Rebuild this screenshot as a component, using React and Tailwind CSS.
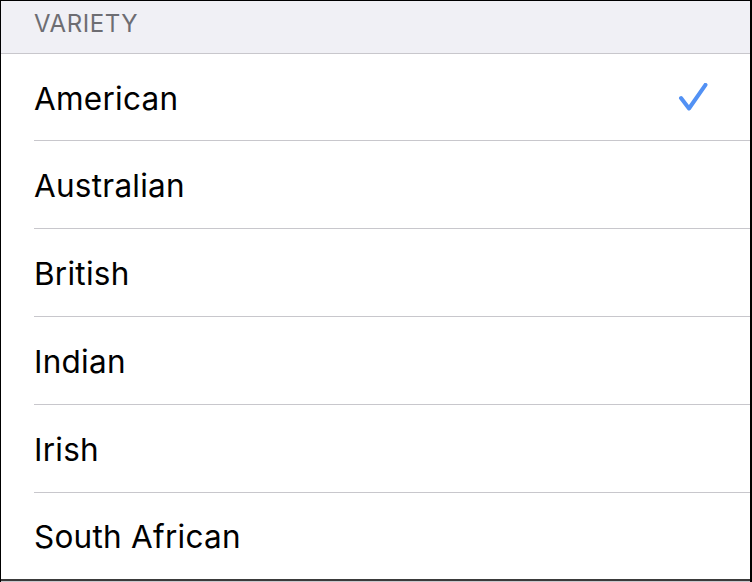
import React from "react";

const items = ["American", "Australian", "British", "Indian", "Irish", "South African"];

export default function App() {
  return (
    <div
      className="w-[752px] h-[582px] bg-white border-t border-l border-r-2 border-black flex flex-col overflow-hidden"
      style={{ fontFamily: "Inter, 'Noto Sans', sans-serif" }}
    >
      <div className="h-[53px] shrink-0 bg-[#f0f0f5] border-b border-[#c8c7cc] flex items-end pl-[33px] pb-[17px]">
        <span className="text-[24px] leading-none tracking-[0.6px] text-[#6d6d72]">VARIETY</span>
      </div>
      <div className="flex flex-col">
        {items.map((name, i) => (
          <div
            key={name}
            className={
              "relative flex items-center justify-between pl-[33px] pr-[39px] " +
              (i === 0 ? "h-[87px]" : i === items.length - 1 ? "h-[86px]" : "h-[88px]")
            }
          >
            <span className="text-[31.5px] leading-none text-black tracking-[0.25px] mt-[2px]">{name}</span>
            {i === 0 && (
              <svg width="34" height="34" viewBox="0 0 34 34" className="mt-[4px]">
                <polyline
                  points="4,15 12,25.5 28.5,1.8"
                  fill="none"
                  stroke="#5291f4"
                  strokeWidth="4"
                  strokeLinecap="round"
                  strokeLinejoin="round"
                />
              </svg>
            )}
            {i < items.length - 1 && (
              <div className="absolute left-[33px] right-0 bottom-0 h-px bg-[#c8c7cc]" />
            )}
          </div>
        ))}
      </div>
      <div className="h-[2px] bg-[#3a3a3a] shrink-0" />
      <div className="h-px bg-[#c8c7cc] shrink-0" />
    </div>
  );
}
